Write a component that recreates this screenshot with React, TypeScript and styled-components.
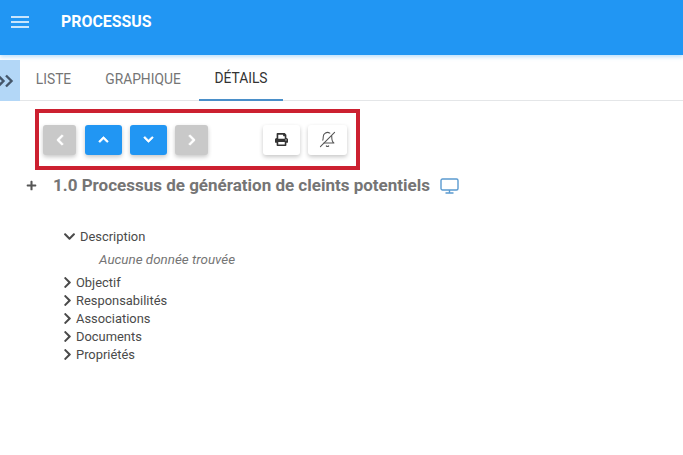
import React from "react";
import styled, { createGlobalStyle } from "styled-components";
import { FaChevronLeft, FaChevronRight, FaChevronUp, FaChevronDown, FaPrint, FaPlus } from "react-icons/fa";
import { LuBellOff } from "react-icons/lu";

const Global = createGlobalStyle`
  html, body { margin: 0; padding: 0; background: #fff; }
  body { font-family: Roboto, "Liberation Sans", sans-serif; }
`;

const Page = styled.div`
  width: 683px;
  height: 455px;
  overflow: hidden;
  background: #fff;
`;

const Header = styled.header`
  height: 55px;
  box-sizing: border-box;
  background: #2196f3;
  box-shadow: 0 2px 4px rgba(33, 150, 243, 0.3);
  display: flex;
  align-items: flex-start;
  padding: 11px 0 0 11px;
  color: #fff;
`;

const MenuIcon = styled.svg`
  margin-top: 5px;
  flex: none;
`;

const Title = styled.h1`
  margin: 2px 0 0 32px;
  font-size: 15.9px;
  line-height: 18px;
  font-weight: 700;
  color: #fff;
`;

const TabBar = styled.nav`
  margin-top: 5px;
  height: 40px;
  display: flex;
  border-bottom: 1px solid #e4e6e8;
`;

const Toggle = styled.div`
  width: 20px;
  height: 41px;
  background: #b3d7f7;
  color: #44566a;
  display: flex;
  align-items: center;
  flex: none;
`;

const Tab = styled.div<{ $active?: boolean; $width: number }>`
  width: ${(p) => p.$width}px;
  height: 41px;
  box-sizing: border-box;
  display: flex;
  align-items: center;
  justify-content: center;
  padding-bottom: 3px;
  font-size: 13.8px;
  color: ${(p) => (p.$active ? "#333" : "#757575")};
  border-bottom: ${(p) => (p.$active ? "2px solid #4a8fc9" : "none")};
`;

const Highlight = styled.section`
  margin: 8px 0 0 35px;
  width: 325px;
  height: 61px;
  box-sizing: border-box;
  border: 4px solid #cc2030;
  display: flex;
  align-items: center;
  padding: 0 0 0 4px;
`;

const NavButton = styled.div<{ $kind: "grey" | "blue" | "white"; $width: number; $gap: number }>`
  width: ${(p) => p.$width}px;
  height: 30px;
  margin-left: ${(p) => p.$gap}px;
  border-radius: 3px;
  display: flex;
  align-items: center;
  justify-content: center;
  flex: none;
  background: ${(p) => (p.$kind === "grey" ? "#c9c9c9" : p.$kind === "blue" ? "#2196f3" : "#fff")};
  color: ${(p) => (p.$kind === "white" ? "#333" : "#fff")};
  box-shadow: 0 2px 4px rgba(0, 0, 0, 0.22);
  & > svg.chunky {
    stroke: currentColor;
    stroke-width: 30;
  }
`;

const MirroredBell = styled(LuBellOff)`
  transform: scaleX(-1);
  color: #555;
`;

const Heading = styled.div`
  display: flex;
  align-items: center;
  margin: 5px 0 0 26px;
  height: 21px;
  color: #757575;
`;

const HeadingText = styled.h2`
  margin: 0 10px 0 16px;
  font-size: 17px;
  line-height: 21px;
  font-weight: 700;
  color: #757575;
  white-space: nowrap;
`;

const Tree = styled.ul`
  list-style: none;
  margin: 31px 0 0 63px;
  padding: 0;
`;

const Row = styled.li`
  display: flex;
  align-items: center;
  height: 18px;
  font-size: 12.9px;
  color: #4a4a4a;
`;

const OpenRow = styled(Row)`
  gap: 4px;
`;

const ClosedRow = styled(Row)`
  gap: 2px;
  margin-left: -2px;
`;

const Empty = styled.li`
  height: 28px;
  margin-left: 36px;
  display: flex;
  align-items: center;
  box-sizing: border-box;
  font-size: 13.4px;
  font-style: italic;
  color: #757575;
`;

const items = ["Objectif", "Responsabilités", "Associations", "Documents", "Propriétés"];

export default function App() {
  return (
    <Page>
      <Global />
      <Header>
        <MenuIcon width="18" height="12" viewBox="0 0 18 12" stroke="currentColor" strokeWidth="1.5">
          <path d="M0 1h18M0 6h18M0 11h18" />
        </MenuIcon>
        <Title>PROCESSUS</Title>
      </Header>
      <TabBar>
        <Toggle>
          <svg width="14" height="14" viewBox="0 0 14 14" fill="none" stroke="currentColor" strokeWidth="2.4">
            <path d="M-1 2.5L3.5 7L-1 11.5" />
            <path d="M6 1.5L11.5 7L6 12.5" />
          </svg>
        </Toggle>
        <Tab $width={67}>LISTE</Tab>
        <Tab $width={112}>GRAPHIQUE</Tab>
        <Tab $width={84} $active>DÉTAILS</Tab>
      </TabBar>
      <Highlight>
        <NavButton $kind="grey" $width={33} $gap={0}><FaChevronLeft className="chunky" size={12} /></NavButton>
        <NavButton $kind="blue" $width={37} $gap={9}><FaChevronUp className="chunky" size={11} /></NavButton>
        <NavButton $kind="blue" $width={37} $gap={8}><FaChevronDown className="chunky" size={11} /></NavButton>
        <NavButton $kind="grey" $width={33} $gap={8}><FaChevronRight className="chunky" size={12} /></NavButton>
        <NavButton $kind="white" $width={37} $gap={55}><FaPrint size={13} /></NavButton>
        <NavButton $kind="white" $width={39} $gap={8}><MirroredBell size={17} strokeWidth={1.5} /></NavButton>
      </Highlight>
      <Heading>
        <FaPlus size={11} color="#555" />
        <HeadingText>1.0 Processus de génération de cleints potentiels</HeadingText>
        <svg width="19" height="16" viewBox="0 0 19 16" fill="none" stroke="#5b9bd0" strokeWidth="1.4">
          <rect x="1" y="1" width="17" height="11" rx="1.5" />
          <path d="M9.5 12v3M5.5 15h8" />
        </svg>
      </Heading>
      <Tree>
        <OpenRow><FaChevronDown size={13} />Description</OpenRow>
        <Empty>Aucune donnée trouvée</Empty>
        {items.map((t) => (
          <ClosedRow key={t}><FaChevronRight size={13} />{t}</ClosedRow>
        ))}
      </Tree>
    </Page>
  );
}
